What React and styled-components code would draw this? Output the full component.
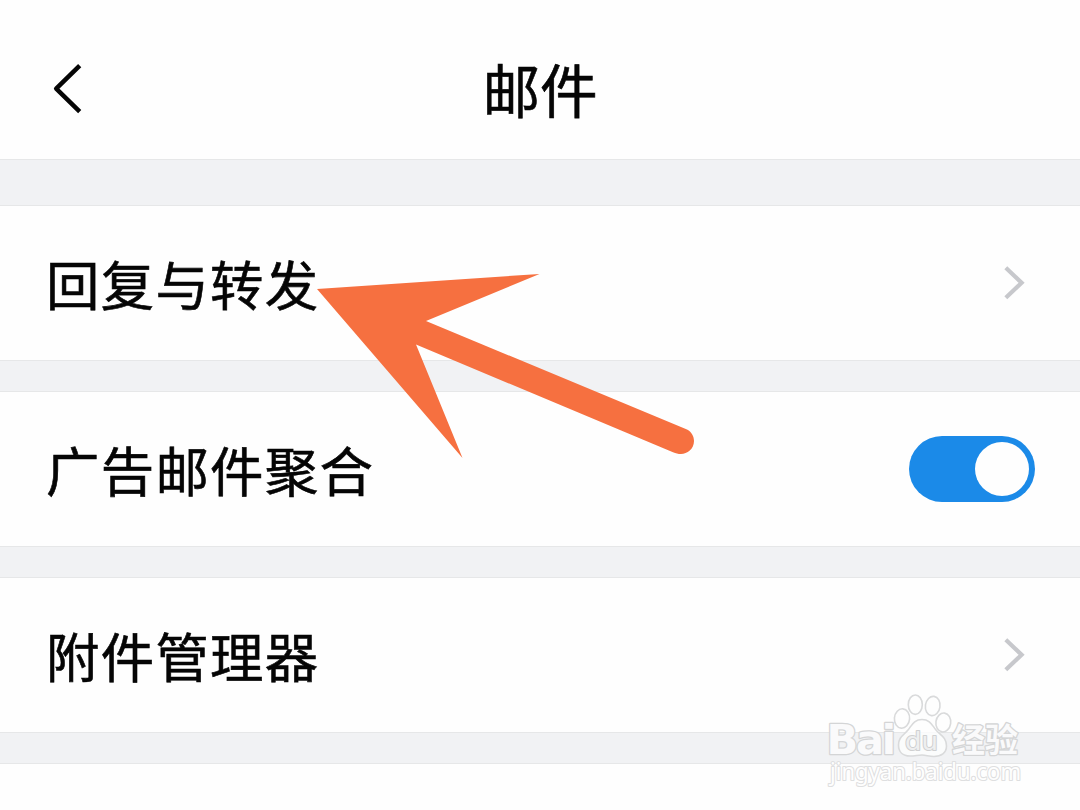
import React from "react";
import styled, { createGlobalStyle } from "styled-components";

const GlobalStyle = createGlobalStyle`
  html, body { margin: 0; padding: 0; background: #fefefe; }
  body { overflow: hidden; }
`;

const Screen = styled.main`
  position: relative;
  width: 1080px;
  height: 810px;
  overflow: hidden;
  display: flex;
  flex-direction: column;
  background: #fefefe;
  color: #050505;
  font-family: "Noto Sans CJK SC", sans-serif;
`;

const Header = styled.header`
  flex: none;
  height: 159px;
  box-sizing: border-box;
  padding: 19px 52px 0;
  display: grid;
  grid-template-columns: 32px 1fr 32px;
  align-items: center;
`;

const BackButton = styled.button`
  display: flex;
  padding: 0;
  border: 0;
  background: none;
`;

const Title = styled.h1`
  margin: 0 0 3px;
  font-size: 57.6px;
  line-height: 80px;
  font-weight: 400;
  text-align: center;
  -webkit-text-stroke: 0.6px currentColor;
`;

const Divider = styled.div`
  flex: none;
  box-sizing: border-box;
  height: ${({ $tall }) => ($tall ? 47 : 32)}px;
  background: #f1f2f4;
  border-top: 1px solid #e6e7e8;
  border-bottom: 1px solid #e6e7e8;
`;

const Row = styled.section`
  flex: none;
  height: 154px;
  box-sizing: border-box;
  padding: 0 45px 0 46px;
  display: flex;
  align-items: center;
  justify-content: space-between;
`;

const Label = styled.span`
  font-size: 53.4px;
  letter-spacing: 1.3px;
  line-height: 80px;
  padding-bottom: 1px;
  white-space: nowrap;
  -webkit-text-stroke: 0.6px currentColor;
`;

const Chevron = styled.svg`
  margin-right: 9px;
`;

const Switch = styled.button`
  display: flex;
  justify-content: flex-end;
  width: 126px;
  height: 66px;
  padding: 6px;
  box-sizing: border-box;
  border: 0;
  border-radius: 33px;
  background: #1b8ae8;
`;

const Knob = styled.span`
  width: 54px;
  height: 54px;
  border-radius: 50%;
  background: #fefefe;
`;

const Pointer = styled.svg`
  position: absolute;
  left: 310px;
  top: 265px;
`;

const Watermark = styled.svg`
  position: absolute;
  left: 820px;
  top: 685px;
`;

const MoreIcon = () => (
  <Chevron width="22" height="36" viewBox="0 0 22 36" fill="none" stroke="#c7c8cc" strokeWidth="4.2">
    <path d="M1.8 2.8L17.6 17.8L1.8 32.8" />
  </Chevron>
);

export default function App() {
  return (
    <>
      <GlobalStyle />
      <Screen>
        <Header>
          <BackButton aria-label="返回">
            <svg width="32" height="54" viewBox="0 0 32 54" fill="none" stroke="#050505" strokeWidth="4.5" strokeLinejoin="round">
              <path d="M27.7 3.6L4.2 26.6L27.7 49.6" />
            </svg>
          </BackButton>
          <Title>邮件</Title>
        </Header>
        <Divider $tall />
        <Row>
          <Label>回复与转发</Label>
          <MoreIcon />
        </Row>
        <Divider />
        <Row>
          <Label>广告邮件聚合</Label>
          <Switch role="switch" aria-checked="true">
            <Knob />
          </Switch>
        </Row>
        <Divider />
        <Row>
          <Label>附件管理器</Label>
          <MoreIcon />
        </Row>
        <Divider />

        <Pointer width="390" height="200" viewBox="310 265 390 200">
          <path
            fill="#f67040"
            d="M317 289L539.5 274L426 321L687 429.5C692 432 694 437 694 441C694 449 687 454 681 454C678 454 676 453.4 673 452.2L416 344.5L462.5 458Z"
          />
        </Pointer>

        <Watermark width="215" height="110" viewBox="820 685 215 110">
          <g fill="#fefefe" fillOpacity="0.8" stroke="#d9dadb" strokeWidth="1.6">
            <ellipse cx="902" cy="718.5" rx="7.6" ry="9.7" transform="rotate(5 902 718.5)" />
            <ellipse cx="915.3" cy="704.7" rx="7" ry="9.7" />
            <ellipse cx="932.7" cy="706" rx="7.3" ry="9.7" transform="rotate(8 932.7 706)" />
            <ellipse cx="943.3" cy="722.5" rx="7.4" ry="9.5" transform="rotate(8 943.3 722.5)" />
            <path d="M922 719.5C930 719.5 932 725 936 730C940 735 946.5 737 946.5 746C946.5 753 941 756.5 934 756.5C929 756.5 926 755 922 755C918 755 915 756 910 756C903 756 898.5 752 898.5 745C898.5 737 904 735 908 730C912 725 914 719.5 922 719.5Z" />
          </g>
          <g fill="#fafafb" stroke="#d4d5d6" strokeWidth="2.6" paintOrder="stroke" strokeLinejoin="round">
            <text x="826.5" y="753.5" fontFamily="DejaVu Sans, sans-serif" fontSize="41.5" fontWeight="700" letterSpacing="-2.2">Bai</text>
            <text x="905" y="750" fontFamily="DejaVu Sans, sans-serif" fontSize="25" fontWeight="400" textLength="33" lengthAdjust="spacingAndGlyphs" fill="#eeeff0" stroke="#cfd0d1" strokeWidth="2">du</text>
            <text x="952" y="752" fontFamily="Noto Sans CJK SC, sans-serif" fontSize="33" fontWeight="700">经验</text>
          </g>
          <text x="830" y="780" fontFamily="Noto Sans, sans-serif" fontSize="23" textLength="191" lengthAdjust="spacingAndGlyphs" fill="#fefefe" stroke="#dedfe0" strokeWidth="2.2" paintOrder="stroke" strokeLinejoin="round">jingyan.baidu.com</text>
        </Watermark>
      </Screen>
    </>
  );
}
